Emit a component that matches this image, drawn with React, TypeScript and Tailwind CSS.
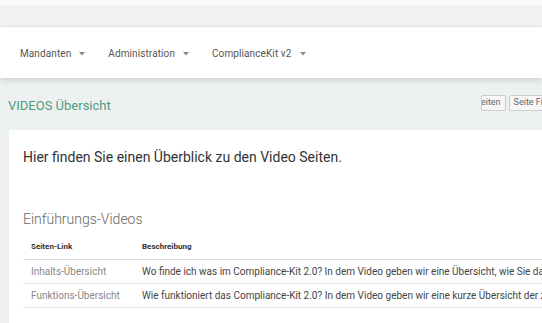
const NAV = ["Mandanten", "Administration", "ComplianceKit v2"];

const ROWS = [
  {
    link: "Inhalts-Übersicht",
    text: "Wo finde ich was im Compliance-Kit 2.0? In dem Video geben wir eine Übersicht, wie Sie das Kit nutzen können.",
  },
  {
    link: "Funktions-Übersicht",
    text: "Wie funktioniert das Compliance-Kit 2.0? In dem Video geben wir eine kurze Übersicht der zentralen Funktionen.",
  },
];

export default function App() {
  return (
    <div className="h-[323px] w-[542px] overflow-hidden bg-[#eef1f2] font-['Roboto',sans-serif]">
      {/* top strip */}
      <div className="h-[5px] bg-[#f8f9fa]" />
      <div className="h-[22px] border-b border-[#e2e4e6] bg-[#f1f2f4]" />

      {/* navbar */}
      <nav className="relative flex h-[51px] items-center gap-[23px] bg-white pl-[20px] pt-[2px] shadow-[0_3px_6px_rgba(0,0,0,0.12)]">
        {NAV.map((n) => (
          <span key={n} className="flex items-center gap-[8px] text-[10px] tracking-[0.1px] text-[#555]">
            {n}
            <svg width="6" height="4" viewBox="0 0 6 4" className="fill-[#888]">
              <path d="M0 0h6L3 3.5z" />
            </svg>
          </span>
        ))}
      </nav>

      {/* title row */}
      <div className="flex h-[52px] items-center justify-between pl-[8px]">
        <h1 className="pt-[4px] text-[13px] text-[#4e9d79]">VIDEOS Übersicht</h1>
        <div className="flex gap-[3px] self-start pt-[17px]">
          <span className="flex h-[16px] items-center overflow-hidden rounded-[2px] border border-[#ccc] bg-[#f7f7f7] pr-[4px] text-[9px] text-[#666]">
            <span className="-ml-[6px]">Seiten</span>
          </span>
          <span className="-mr-[6px] flex h-[16px] items-center rounded-[2px] border border-[#ccc] bg-[#f7f7f7] px-[4px] text-[9px] text-[#666]">
            Seite Fi
          </span>
        </div>
      </div>

      {/* content panel */}
      <div className="ml-[9px] h-[200px] bg-white pl-[14px] pt-[17px]">
        <p className="text-[14px] text-[#333]">Hier finden Sie einen Überblick zu den Video Seiten.</p>

        <h2 className="mt-[41px] text-[14px] font-light text-[#666]">Einführungs-Videos</h2>

        <table className="mt-[5px] w-[700px] table-fixed border-collapse text-left">
          <colgroup>
            <col className="w-[119px]" />
            <col />
          </colgroup>
          <thead>
            <tr className="border-b border-[#ddd]">
              <th className="h-[24px] pl-[8px] text-[8px] font-bold text-[#333]">Seiten-Link</th>
              <th className="text-[8px] font-bold text-[#333]">Beschreibung</th>
            </tr>
          </thead>
          <tbody>
            {ROWS.map((r) => (
              <tr key={r.link} className="border-b border-[#e3e3e3]">
                <td className="h-[24px] whitespace-nowrap pl-[8px] text-[10px] text-[#888]">{r.link}</td>
                <td className="overflow-hidden whitespace-nowrap text-[10px] text-[#444]">{r.text}</td>
              </tr>
            ))}
          </tbody>
        </table>
      </div>
    </div>
  );
}
